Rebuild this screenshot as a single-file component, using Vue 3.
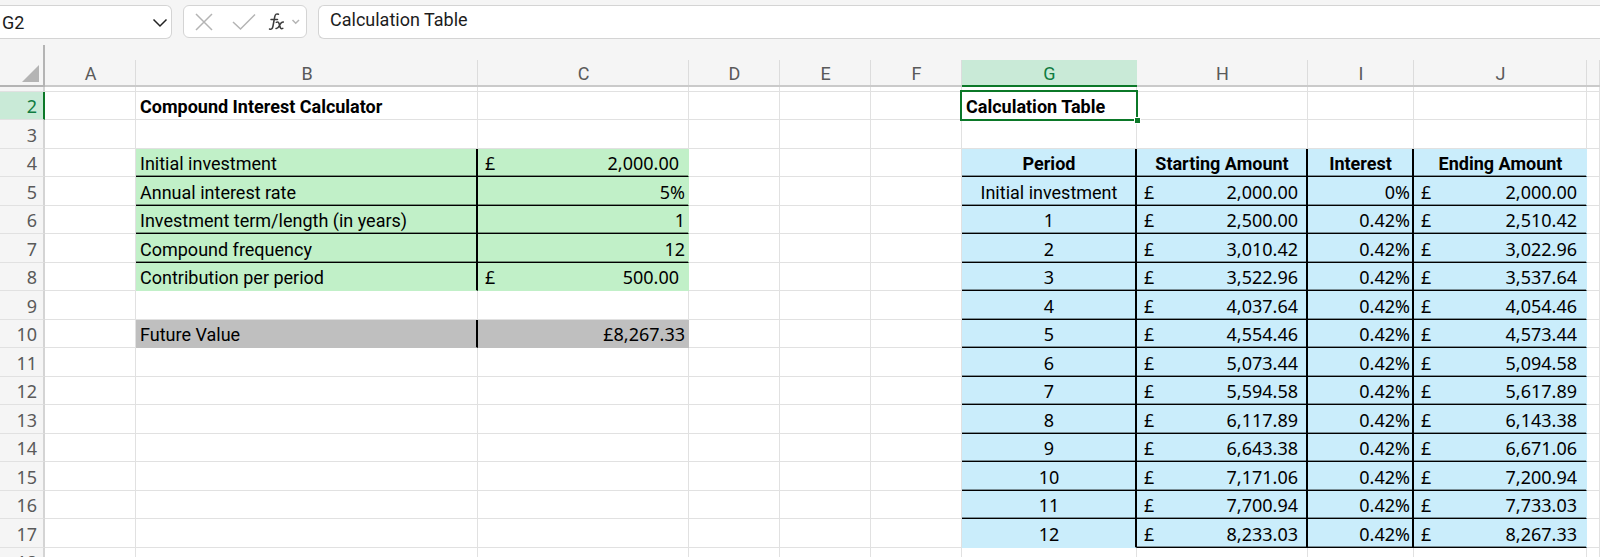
<script setup>
const columns = ['A', 'B', 'C', 'D', 'E', 'F', 'G', 'H', 'I', 'J', 'K']

const inputs = {
  4: ['Initial investment', '2,000.00', true],
  5: ['Annual interest rate', '5%', false],
  6: ['Investment term/length (in years)', '1', false],
  7: ['Compound frequency', '12', false],
  8: ['Contribution per period', '500.00', true],
}

const schedule = [
  ['Initial investment', '2,000.00', '0%', '2,000.00'],
  ['1', '2,500.00', '0.42%', '2,510.42'],
  ['2', '3,010.42', '0.42%', '3,022.96'],
  ['3', '3,522.96', '0.42%', '3,537.64'],
  ['4', '4,037.64', '0.42%', '4,054.46'],
  ['5', '4,554.46', '0.42%', '4,573.44'],
  ['6', '5,073.44', '0.42%', '5,094.58'],
  ['7', '5,594.58', '0.42%', '5,617.89'],
  ['8', '6,117.89', '0.42%', '6,143.38'],
  ['9', '6,643.38', '0.42%', '6,671.06'],
  ['10', '7,171.06', '0.42%', '7,200.94'],
  ['11', '7,700.94', '0.42%', '7,733.03'],
  ['12', '8,233.03', '0.42%', '8,267.33'],
]
const titles = { G: 'Period', H: 'Starting Amount', I: 'Interest', J: 'Ending Amount' }

function cell(col, row) {
  if (row === 2 && col === 'B') return { text: 'Compound Interest Calculator', cls: 'bold' }
  if (row === 2 && col === 'G') return { text: 'Calculation Table', cls: 'bold active' }
  if (inputs[row] && (col === 'B' || col === 'C')) {
    const [label, value, money] = inputs[row]
    const under = row < 8 ? ' under' : ''
    if (col === 'B') return { text: label, cls: 'green side' + under }
    return { text: value, money, cls: 'green num' + under }
  }
  if (row === 10 && col === 'B') return { text: 'Future Value', cls: 'grey side' }
  if (row === 10 && col === 'C') return { text: '£8,267.33', cls: 'grey num' }
  if (row >= 4 && row <= 17 && 'GHIJ'.includes(col)) {
    const under = row < 17 || col !== 'G' ? ' under' : ''
    const side = col !== 'J' ? ' side' : ''
    if (row === 4) return { text: titles[col], cls: 'blue mid bold' + under + side }
    const text = schedule[row - 5]['GHIJ'.indexOf(col)]
    const align = col !== 'G' ? ' num' : row === 5 ? ' mid' : ' num mid'
    return { text, money: col === 'H' || col === 'J', cls: 'blue' + align + under + side }
  }
  return { text: '', cls: '' }
}

const rows = Array.from({ length: 17 }, (_, i) => {
  const n = i + 2
  return { n, tall: n % 2 === 1, cells: columns.map((c) => ({ id: c, ...cell(c, n) })) }
})
</script>

<template>
  <main class="sheet">
    <header class="bar">
      <div class="namebox">
        <input type="text" value="G2" aria-label="Name Box" />
        <button type="button" aria-label="Show names">
          <svg width="16" height="10" viewBox="0 0 16 10"><path d="M1.5 1.5 8 8l6.500-6.500" fill="none" stroke="#222" stroke-width="1.500" /></svg>
        </button>
      </div>
      <div class="tools">
        <button type="button" aria-label="Cancel">
          <svg width="18" height="18" viewBox="0 0 18 18"><path d="M1 1 17 17M17 1 1 17" stroke="#b4b4b4" stroke-width="1.500" /></svg>
        </button>
        <button type="button" aria-label="Enter">
          <svg width="24" height="18" viewBox="0 0 24 18"><path d="m1 9 7.500 7L23 1.500" fill="none" stroke="#b4b4b4" stroke-width="1.500" /></svg>
        </button>
        <button type="button" aria-label="Insert Function" class="fx">
          <svg width="32" height="20" viewBox="0 0 32 20">
            <g fill="none" stroke="#3c3c3c" stroke-width="1.500" stroke-linecap="round">
              <path d="M10.500 2.300C8.300 1.300 7.200 2.300 6.700 5L4.900 14.500C4.400 17 3.200 17.700 1.500 17M3 7.500h6.500" />
              <path d="M8.300 10.300c2-1 2.500 0 3.300 3s1.300 4 3.200 3M15.300 10c-1.700-.3-2.600 1-3.600 3s-1.900 3.800-3.700 3.400" />
            </g>
            <path d="m24.500 8 3.200 3.200L31 8" fill="none" stroke="#b4b4b4" stroke-width="1.500" />
          </svg>
        </button>
      </div>
      <input class="formula" type="text" value="Calculation Table" aria-label="Formula Bar" />
    </header>

    <table class="grid">
      <colgroup>
        <col class="w-head" />
        <col v-for="c in columns" :key="c" :class="'w-' + c" />
      </colgroup>
      <thead>
        <tr>
          <th class="corner" scope="col"><span class="wedge"></span></th>
          <th v-for="c in columns" :key="c" scope="col" :class="{ picked: c === 'G' }">{{ c === 'K' ? '' : c }}</th>
        </tr>
      </thead>
      <tbody>
        <tr class="sliver">
          <th></th>
          <td v-for="c in columns" :key="c"></td>
        </tr>
        <tr v-for="r in rows" :key="r.n" :class="{ tall: r.tall }">
          <th scope="row" :class="{ picked: r.n === 2 }">{{ r.n }}</th>
          <td v-for="c in r.cells" :key="c.id" :class="c.cls">
            <div v-if="c.money" class="money"><span>£</span><span>{{ c.text }}</span></div>
            <template v-else>{{ c.text }}</template>
          </td>
        </tr>
      </tbody>
    </table>
  </main>
</template>

<style>
html,
body {
  height: 100%;
  overflow: hidden;
}
</style>

<style scoped>
.sheet {
  height: 100vh;
  overflow: hidden;
  background: #fff;
  font: 18px/24px Roboto, 'Liberation Sans', sans-serif;
  color: #000;
}
.bar {
  display: flex;
  align-items: flex-start;
  gap: 11px;
  height: 45px;
  box-sizing: border-box;
  padding-top: 5px;
  background: #f5f5f5;
}
.namebox,
.tools,
.formula {
  box-sizing: border-box;
  height: 34px;
  border: 1px solid #d4d4d4;
  border-radius: 6px;
  background: #fff;
}
.tools {
  height: 33px;
}
.namebox {
  display: flex;
  align-items: center;
  width: 172px;
  border-left: 0;
  border-radius: 0 6px 6px 0;
}
.bar input {
  font: inherit;
  color: #1c1c1c;
  outline: 0;
}
.namebox input {
  flex: 1;
  min-width: 0;
  border: 0;
  padding: 2px 0 0 2px;
  background: none;
}
.bar button {
  display: flex;
  align-items: center;
  padding: 0;
  border: 0;
  background: none;
}
.namebox button {
  padding: 2px 3px 0 0;
}
.tools {
  display: flex;
  align-items: center;
  gap: 19px;
  width: 124px;
  padding-left: 11px;
}
.tools .fx {
  margin-left: -7px;
}
.bar .formula {
  flex: 1;
  border-right: 0;
  border-radius: 6px 0 0 6px;
  padding: 0 0 5px 11px;
}
.grid {
  width: 100%;
  table-layout: fixed;
  border-collapse: separate;
  border-spacing: 0;
}
.w-head { width: 45px; }
.w-A, .w-D, .w-E, .w-F { width: 91px; }
.w-B { width: 342px; }
.w-C { width: 211px; }
.w-G { width: 175px; }
.w-H { width: 171px; }
.w-I { width: 106px; }
.w-J { width: 173px; }
th,
td {
  box-sizing: border-box;
  height: 28px;
  padding: 4px 3px 0 4px;
  overflow: hidden;
  white-space: nowrap;
  vertical-align: top;
  line-height: 22px;
  border-right: 1px solid #e1e1e1;
  border-bottom: 1px solid #e1e1e1;
  text-align: left;
}
th {
  background: #f5f5f5;
  color: #5a5a5a;
  font-weight: 400;
}
thead th {
  height: 42px;
  padding: 18px 0 0;
  text-align: center;
  border-bottom: 2px solid #cacaca;
}
thead th:not(.corner) {
  border-right: 0;
  background: linear-gradient(#dcdcdc, #dcdcdc) right bottom / 1px 25px no-repeat #f5f5f5;
}
thead th.picked:not(.corner) {
  border-bottom-color: #0b7828;
  background: linear-gradient(#c9ead7, #c9ead7) 0 bottom / 100% 25px no-repeat #f5f5f5;
  color: #107c41;
}
thead .corner {
  padding: 20px 4px 0 0;
  border-right: 2px solid #b4b4b4;
  border-bottom-color: #b4b4b4;
}
.wedge {
  display: block;
  width: 17px;
  height: 17px;
  margin-left: auto;
  background: #b4b4b4;
  clip-path: polygon(100% 0, 100% 100%, 0 100%);
}
tbody th {
  padding: 3px 6px 0 0;
  font-family: 'Noto Sans', sans-serif;
  text-align: right;
  border-right: 2px solid #d4d4d4;
}
.sliver th,
.sliver td {
  height: 5px;
  padding: 0;
  line-height: 0;
}
tbody .picked {
  background: #c9ead7;
  color: #107c41;
  border-right-color: #0b7828;
}
.bold {
  font-weight: 700;
}
.num {
  padding-top: 3px;
  font-family: 'Noto Sans', sans-serif;
  text-align: right;
}
.tall td {
  height: 29px;
  padding-top: 5px;
}
.tall th,
.tall .num {
  padding-top: 4px;
}
.mid {
  text-align: center;
}
.green {
  background: #c1f0c8;
  border-color: #c1f0c8;
}
.grey {
  background: #bfbfbf;
  border-color: #bfbfbf;
}
.blue {
  background: #caedfb;
  border-color: #caedfb;
}
.num.side:not(.mid) {
  padding-right: 2px;
}
.under {
  border-bottom: 1px solid #000;
  box-shadow: inset 0 -1px 0 rgba(0, 0, 0, 0.4);
}
.side {
  border-right: 2px solid #000;
}
.money {
  display: flex;
  justify-content: space-between;
  padding: 0 6px 0 3px;
}
.active {
  position: relative;
  overflow: visible;
}
.active::before {
  content: '';
  position: absolute;
  inset: -2px;
  border: 2px solid #0b7828;
}
.active::after {
  content: '';
  position: absolute;
  right: -5px;
  bottom: -5px;
  width: 5px;
  height: 5px;
  border: 1px solid #fff;
  background: #0b7828;
}
</style>
